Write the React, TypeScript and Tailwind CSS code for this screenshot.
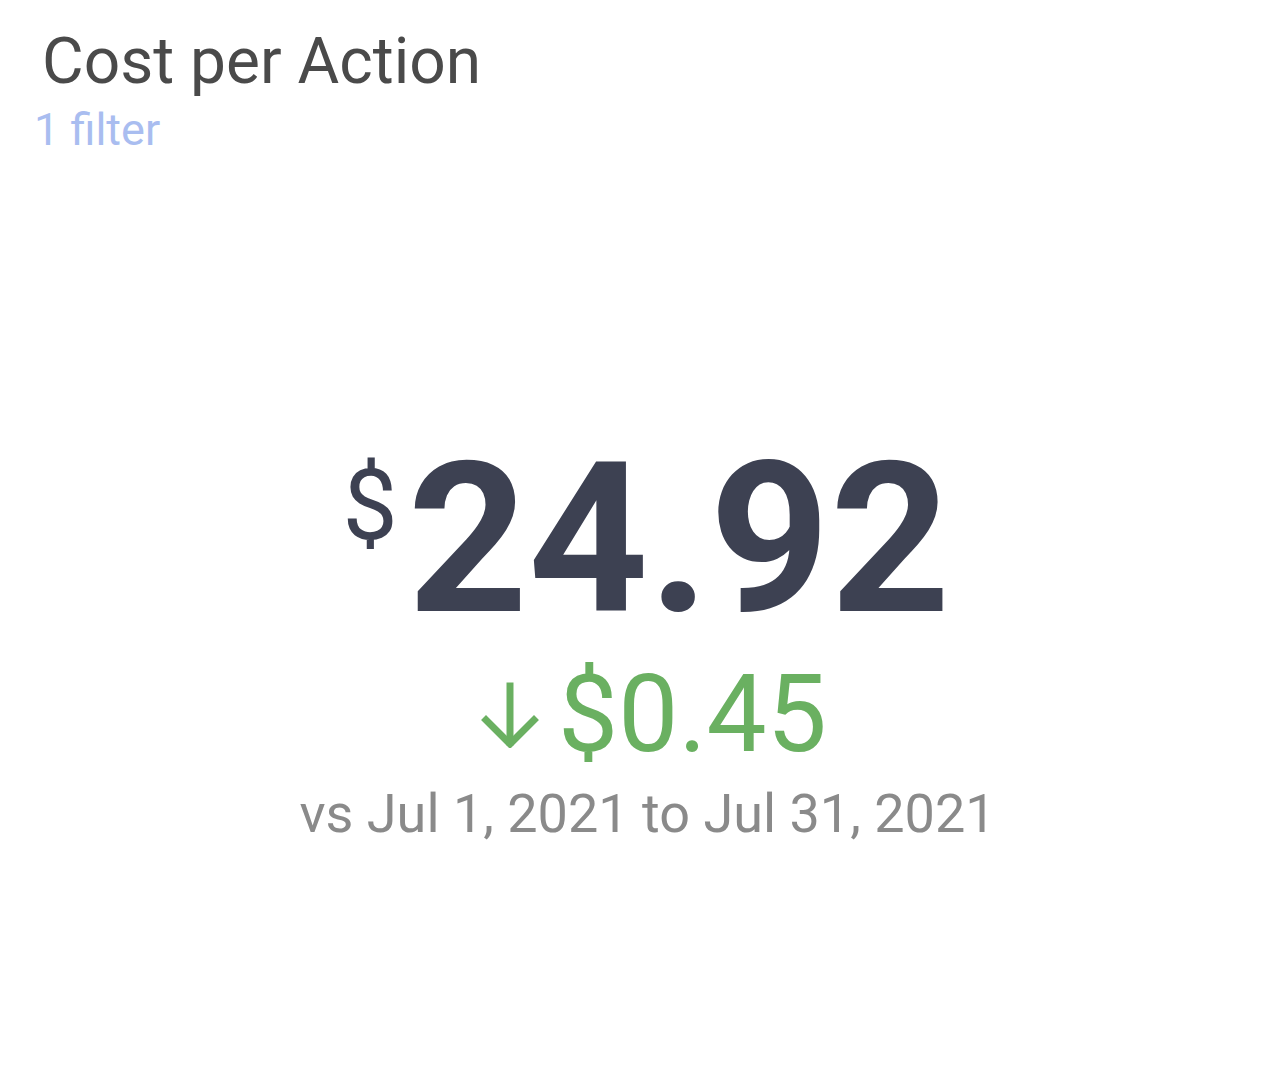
import React from 'react';

export default function App() {
  return (
    <div className="w-[1275px] h-[1080px] bg-white flex flex-col font-['Roboto','Liberation_Sans',sans-serif]">
      <div className="pl-[42px] pt-[22px]">
        <h1 className="text-[64px] leading-[80px] text-[#4a4a4a] font-normal">Cost per Action</h1>
        <p className="-ml-[8px] mt-[3px] text-[45px] leading-[50px] text-[#a9bdf0]">1 filter</p>
      </div>

      <div className="flex flex-col items-center mt-[294px] pl-[14px]">
        <div className="flex items-start text-[#3d4152] pl-[4px]">
          <span className="text-[98px] leading-none mt-[8px] mr-[10px]">$</span>
          <span className="text-[210px] leading-[180px] font-bold">24.92</span>
        </div>
        <div className="flex items-center text-[#6ab061] mt-[31px] pl-[18px]">
          <svg width="60" height="66" viewBox="0 0 60 66" fill="none" stroke="currentColor" strokeWidth="7" strokeLinecap="square" className="mr-[18px]">
            <path d="M30 4v56" />
            <path d="M6 38l24 24 24-24" />
          </svg>
          <span className="text-[107px] leading-[110px]">$0.45</span>
        </div>
        <p className="text-[54px] leading-[70px] text-[#8a8a8a] mt-[9px] pl-[6px]">vs Jul 1, 2021 to Jul 31, 2021</p>
      </div>
    </div>
  );
}
